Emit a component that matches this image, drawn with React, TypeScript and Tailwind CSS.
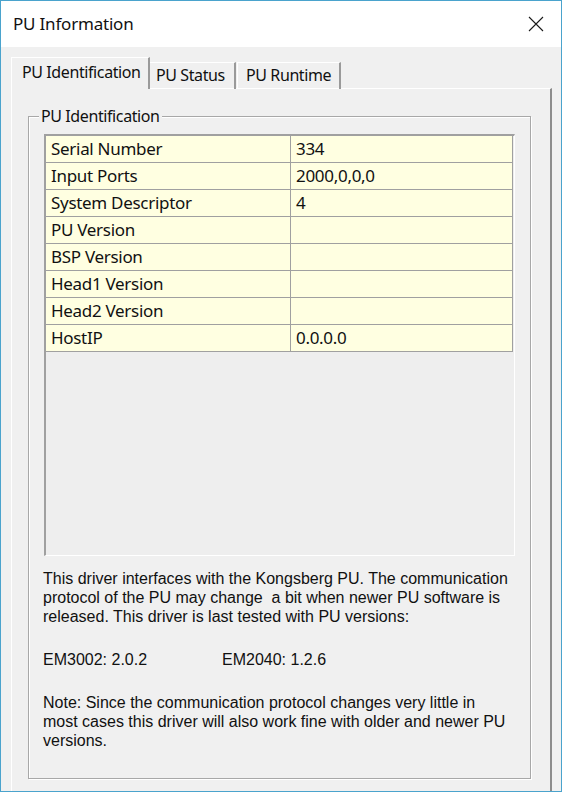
import React from "react"

const rows: [string, string][] = [
  ["Serial Number", "334"],
  ["Input Ports", "2000,0,0,0"],
  ["System Descriptor", "4"],
  ["PU Version", ""],
  ["BSP Version", ""],
  ["Head1 Version", ""],
  ["Head2 Version", ""],
  ["HostIP", "0.0.0.0"],
]

const ui = "font-['Noto_Sans',sans-serif]"
const sans = "font-['Liberation_Sans',Arial,sans-serif]"

function CloseIcon() {
  return (
    <svg width="16" height="16" viewBox="0 0 16 16" className="text-[#1a1a1a]">
      <path d="M1 1 L15 15 M15 1 L1 15" stroke="currentColor" strokeWidth="1.1" fill="none" />
    </svg>
  )
}

export default function App() {
  return (
    <div className="w-[562px] h-[792px] border border-[#4aa3cd] flex flex-col bg-[#f0f0f0] overflow-hidden">
      {/* Title bar */}
      <div className="h-[46px] bg-white flex items-center justify-between pl-3 pr-[17px] shrink-0">
        <span className={`${ui} text-[17px] text-[#111] tracking-[-0.2px]`}>PU Information</span>
        <CloseIcon />
      </div>

      {/* Body */}
      <div className="flex-1 flex flex-col pl-[10px] pr-[9px] pt-[10px]">
        {/* Tabs */}
        <div className={`${ui} flex items-end h-[32px] text-[16px] text-[#111] relative z-10 tracking-[-0.4px]`}>
          <div className="w-[139px] h-[32px] pl-[10px] pt-[2px] bg-[#f0f0f0] border-l border-t border-white border-r-2 border-r-[#9a9a9a]">
            PU Identification
          </div>
          <div className="w-[86px] h-[27px] pl-[6px] border-t border-white border-r-2 border-r-[#9a9a9a]">
            PU Status
          </div>
          <div className="w-[104px] h-[27px] pl-[8px] border-t border-l border-white border-r-2 border-r-[#9a9a9a] ml-[1px]">
            PU Runtime
          </div>
        </div>

        {/* Tab panel */}
        <div className="flex-1 -mt-[1px] border-l border-t border-white border-r-2 border-r-[#8c8c8c] pl-[16px] pr-[19px] pt-[27px] pb-[12px] flex">
          {/* Group box */}
          <div className="relative flex-1 border border-[#a8a8a8] shadow-[inset_1px_1px_0_#fff,1px_1px_0_#fff] pl-[15px] pr-[15px] pt-[17px] flex flex-col">
            <span className={`${ui} absolute -top-[11px] left-[10px] px-[2px] bg-[#f0f0f0] text-[16px] text-[#111] tracking-[-0.4px] leading-[20px]`}>
              PU Identification
            </span>

            {/* Grid */}
            <div className="h-[422px] border-l-2 border-t-2 border-[#a0a0a0] border-r border-r-white border-b border-b-white bg-[#eeeeee]">
              <div className={`${ui} w-[467px] text-[17px] text-[#111] tracking-[-0.3px]`}>
                {rows.map(([k, v]) => (
                  <div key={k} className="flex h-[27px] bg-[#ffffe1] border-b border-r border-[#a0a0a0]">
                    <div className="w-[245px] border-r border-[#a0a0a0] pl-[5px] leading-[26px]">{k}</div>
                    <div className="flex-1 pl-[5px] leading-[26px]">{v}</div>
                  </div>
                ))}
              </div>
            </div>

            {/* Description */}
            <div className={`${sans} text-[16px] leading-[19px] text-[#111] -ml-[1px] mt-[13px]`}>
              <p>
                This driver interfaces with the Kongsberg PU. The communication
                <br />
                protocol of the PU may change&nbsp; a bit when newer PU software is
                <br />
                released. This driver is last tested with PU versions:
              </p>
              <div className="flex mt-[24px]">
                <span className="w-[179px]">EM3002: 2.0.2</span>
                <span>EM2040: 1.2.6</span>
              </div>
              <p className="mt-[24px]">
                Note: Since the communication protocol changes very little in
                <br />
                most cases this driver will also work fine with older and newer PU
                <br />
                versions.
              </p>
            </div>
          </div>
        </div>
      </div>
    </div>
  )
}
